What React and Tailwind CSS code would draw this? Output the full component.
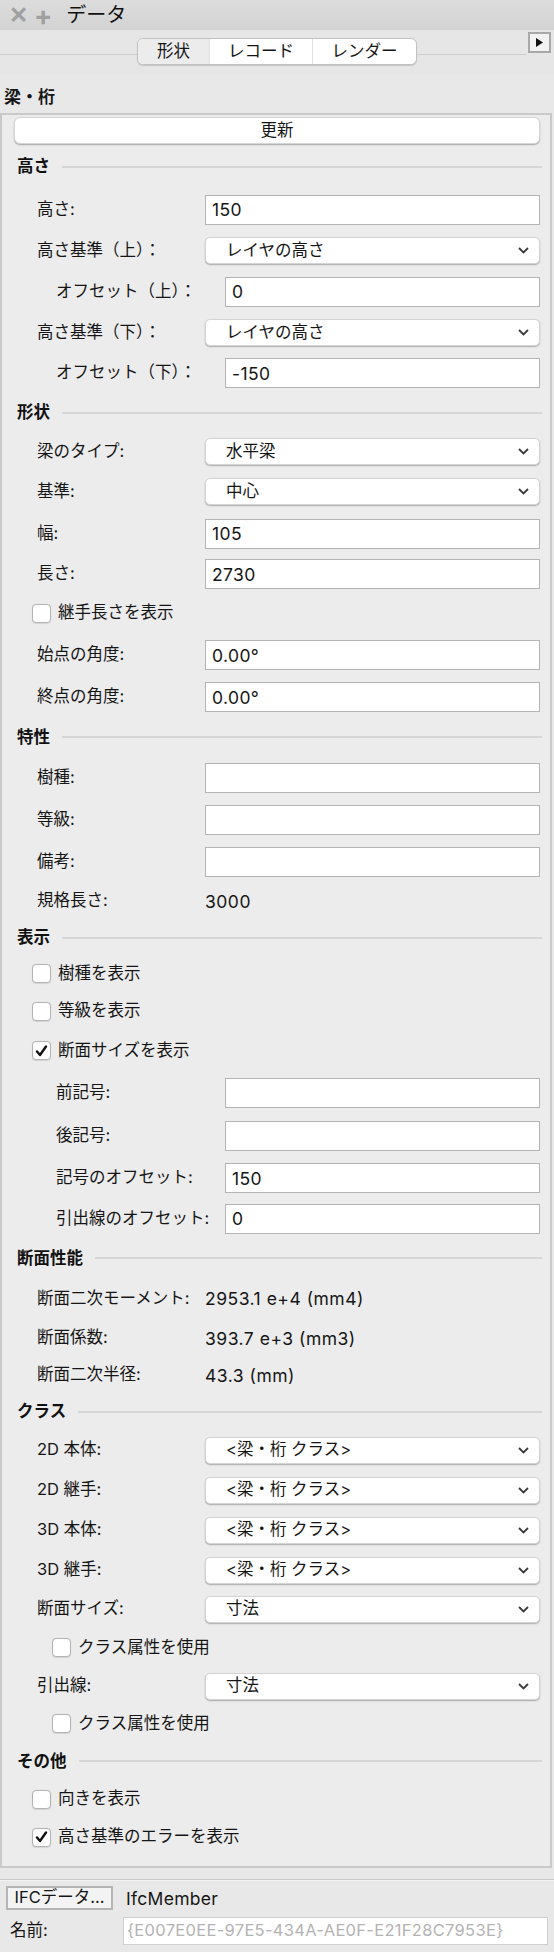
import React from "react";

function Chevron() {
  return (
    <svg width="11" height="7" viewBox="0 0 11 7" className="shrink-0">
      <path d="M1 1 L5.5 5.5 L10 1" fill="none" stroke="#3a3a3a" strokeWidth="1.8" />
    </svg>
  );
}

function Header({ children, h }) {
  return (
    <div className={`flex items-center pl-[15px] pr-[8px] ${h}`}>
      <span className="font-bold text-[16.5px] leading-none text-[#111]">{children}</span>
      <div className="flex-1 h-[2px] bg-[#d6d6d6] ml-[12px]" />
    </div>
  );
}

function InputRow({ label, value, h, indent }) {
  return (
    <div className={`flex items-center ${h}`}>
      <div className={indent ? "w-[223px] pl-[54px] shrink-0" : "w-[203px] pl-[35px] shrink-0"}>{label}</div>
      <div
        className={`${indent ? "w-[315px]" : "w-[335px]"} h-[30px] border border-[#b4b4b4] bg-white flex items-center pl-[6px] text-[17.5px] tracking-[0.4px]`}
      >
        {value}
      </div>
    </div>
  );
}

function SelectRow({ label, value, h }) {
  return (
    <div className={`flex items-center ${h}`}>
      <div className="w-[203px] pl-[35px] shrink-0">{label}</div>
      <div className="w-[335px] h-[27px] rounded-[5px] bg-white border border-[#d4d4d4] shadow-[0_1px_1.5px_rgba(0,0,0,0.28)] flex items-center justify-between pl-[20px] pr-[10px]">
        <span>{value}</span>
        <Chevron />
      </div>
    </div>
  );
}

function TextRow({ label, value, h }) {
  return (
    <div className={`flex items-center ${h}`}>
      <div className="w-[203px] pl-[35px] shrink-0">{label}</div>
      <div className="text-[17.5px] tracking-[0.5px]">{value}</div>
    </div>
  );
}

function Check({ label, checked, h, indent }) {
  return (
    <div className={`flex items-center ${h} ${indent ? "pl-[50px]" : "pl-[30px]"}`}>
      <div className="w-[19px] h-[19px] rounded-[4px] border border-[#b3b3b3] bg-white flex items-center justify-center shadow-[0_0.5px_1px_rgba(0,0,0,0.1)]">
        {checked && (
          <svg width="13" height="12" viewBox="0 0 13 12">
            <path d="M2 6.5 L5 10 L11 1.5" fill="none" stroke="#111" strokeWidth="2.4" strokeLinecap="round" strokeLinejoin="round" />
          </svg>
        )}
      </div>
      <span className="ml-[7px]">{label}</span>
    </div>
  );
}

export default function App() {
  const cls = "<梁・桁 クラス>";
  return (
    <div className="w-[554px] h-[1952px] bg-[#e8e8e8] text-[16.5px] leading-[1.2] text-[#151515] font-['Inter','Noto_Sans_CJK_JP',sans-serif] overflow-hidden">
      {/* title bar */}
      <div className="h-[30px] bg-gradient-to-b from-[#dcdcdc] to-[#d3d3d3] flex items-center pl-[9px]">
        <span className="text-[#a0a0a0] font-bold text-[23px] leading-none">✕</span>
        <span className="text-[#a0a0a0] font-bold text-[27px] leading-none ml-[6px]">+</span>
        <span className="ml-[14px] text-[20px] leading-none text-[#111]">データ</span>
      </div>
      {/* toolbar */}
      <div className="relative h-[45px] bg-[#e6e6e6]">
        <div className="absolute left-0 right-[28px] top-[24px] h-[1px] bg-[#cdcdcd]" />
        <div className="absolute right-[3px] top-[2px] w-[23px] h-[21px] border-2 border-[#a8a8a8] bg-[#f2f2f2] flex items-center justify-center">
          <svg width="7" height="9" viewBox="0 0 7 9"><path d="M0 0 L7 4.5 L0 9 Z" fill="#111" /></svg>
        </div>
        <div className="relative flex justify-center pt-[8px]">
          <div className="flex h-[27px] rounded-[6px] border border-[#c2c2c2] bg-white shadow-[0_1px_1px_rgba(0,0,0,0.15)] overflow-hidden text-[16.5px]">
            <div className="w-[71px] flex items-center justify-center bg-[#ececec]">形状</div>
            <div className="w-[103px] flex items-center justify-center border-l border-[#e0e0e0]">レコード</div>
            <div className="w-[104px] flex items-center justify-center border-l border-[#e0e0e0]">レンダー</div>
          </div>
        </div>
      </div>
      {/* object name */}
      <div className="h-[38px] flex items-center pt-[6px] pl-[4px]">
        <span className="font-bold text-[17px] leading-none">梁・桁</span>
      </div>
      {/* panel */}
      <div className="w-[552px] border-2 border-[#c9c9c9] bg-[#ececec] pb-[10px]">
        <div className="pt-[2px] pl-[12px] pr-[10px]">
          <div className="h-[27px] rounded-[6px] bg-white shadow-[0_1px_1.5px_rgba(0,0,0,0.3)] border border-[#d6d6d6] flex items-center justify-center">
            更新
          </div>
        </div>
        <Header h="h-[45px]">高さ</Header>
        <InputRow h="h-[41px]" label="高さ:" value="150" />
        <SelectRow h="h-[41px]" label="高さ基準（上）：" value="レイヤの高さ" />
        <InputRow h="h-[41px]" indent label="オフセット（上）：" value="0" />
        <SelectRow h="h-[41px]" label="高さ基準（下）：" value="レイヤの高さ" />
        <InputRow h="h-[40px]" indent label="オフセット（下）：" value="-150" />
        <Header h="h-[39px]">形状</Header>
        <SelectRow h="h-[39px]" label="梁のタイプ:" value="水平梁" />
        <SelectRow h="h-[41px]" label="基準:" value="中心" />
        <InputRow h="h-[43px]" label="幅:" value="105" />
        <InputRow h="h-[38px]" label="長さ:" value="2730" />
        <Check h="h-[40px]" label="継手長さを表示" />
        <InputRow h="h-[44px]" label="始点の角度:" value="0.00°" />
        <InputRow h="h-[40px]" label="終点の角度:" value="0.00°" />
        <Header h="h-[40px]">特性</Header>
        <InputRow h="h-[42px]" label="樹種:" value="" />
        <InputRow h="h-[42px]" label="等級:" value="" />
        <InputRow h="h-[41px]" label="備考:" value="" />
        <TextRow h="h-[38px]" label="規格長さ:" value="3000" />
        <Header h="h-[35px]">表示</Header>
        <Check h="h-[37px]" label="樹種を表示" />
        <Check h="h-[38px]" label="等級を表示" />
        <Check h="h-[41px]" checked label="断面サイズを表示" />
        <InputRow h="h-[44px]" indent label="前記号:" value="" />
        <InputRow h="h-[42px]" indent label="後記号:" value="" />
        <InputRow h="h-[42px]" indent label="記号のオフセット:" value="150" />
        <InputRow h="h-[39px]" indent label="引出線のオフセット:" value="0" />
        <Header h="h-[40px]">断面性能</Header>
        <TextRow h="h-[41px]" label="断面二次モーメント:" value="2953.1 e+4 (mm4)" />
        <TextRow h="h-[38px]" label="断面係数:" value="393.7 e+3 (mm3)" />
        <TextRow h="h-[36px]" label="断面二次半径:" value="43.3 (mm)" />
        <Header h="h-[37px]">クラス</Header>
        <SelectRow h="h-[40px]" label="2D 本体:" value={cls} />
        <SelectRow h="h-[40px]" label="2D 継手:" value={cls} />
        <SelectRow h="h-[40px]" label="3D 本体:" value={cls} />
        <SelectRow h="h-[40px]" label="3D 継手:" value={cls} />
        <SelectRow h="h-[38px]" label="断面サイズ:" value="寸法" />
        <Check h="h-[39px]" indent label="クラス属性を使用" />
        <SelectRow h="h-[38px]" label="引出線:" value="寸法" />
        <Check h="h-[37px]" indent label="クラス属性を使用" />
        <Header h="h-[38px]">その他</Header>
        <Check h="h-[38px]" label="向きを表示" />
        <Check h="h-[38px]" checked label="高さ基準のエラーを表示" />
      </div>
      {/* bottom */}
      <div className="mt-[11px] h-[1px] bg-[#c9c9c9]" />
      <div className="h-[1px] bg-[#f4f4f4]" />
      <div className="mt-[5px] flex items-center h-[24px]">
        <div className="ml-[6px] w-[107px] h-[24px] border-2 border-[#b5b5b5] bg-[#f3f3f3] flex items-center justify-center text-[16.5px]">
          IFCデータ...
        </div>
        <span className="ml-[13px] text-[17.5px] tracking-[0.3px]">IfcMember</span>
      </div>
      <div className="mt-[7px] flex items-center h-[28px]">
        <span className="pl-[10px] w-[123px]">名前:</span>
        <div className="w-[425px] h-[28px] border border-[#d0d0d0] bg-white flex items-center pl-[3px] text-[16.5px] tracking-[0.3px] text-[#b3b3b3] whitespace-nowrap overflow-hidden">
          {"{E007E0EE-97E5-434A-AE0F-E21F28C7953E}"}
        </div>
      </div>
    </div>
  );
}
